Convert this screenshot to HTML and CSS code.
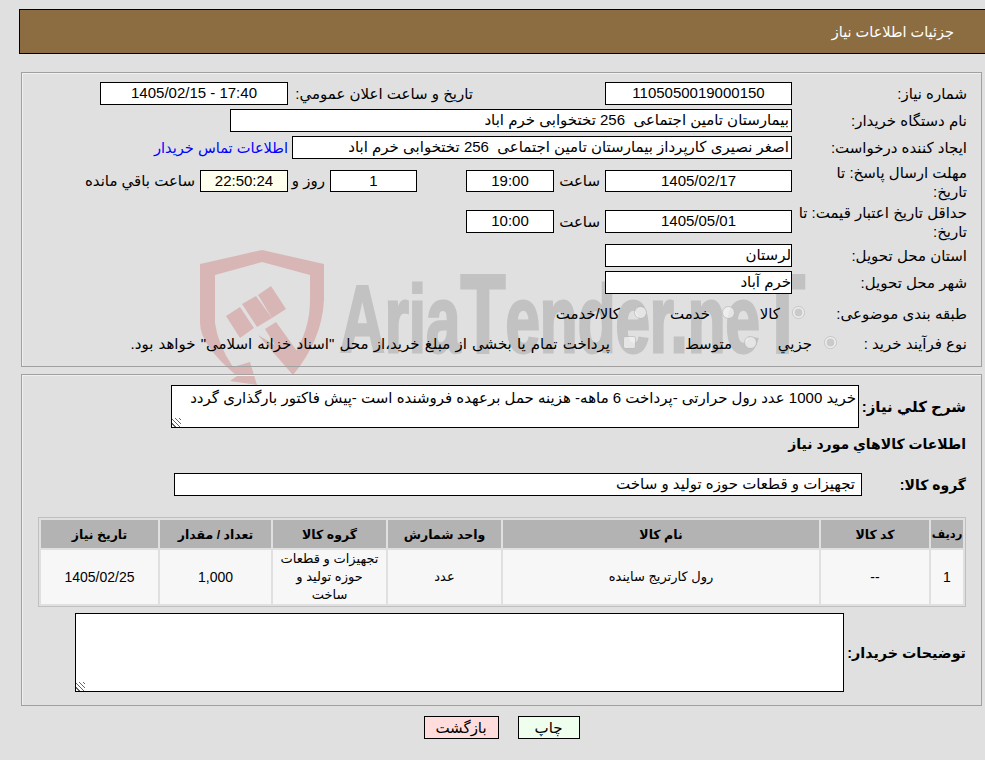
FILE: index.html
```html
<!DOCTYPE html>
<html lang="fa" dir="rtl">
<head>
<meta charset="utf-8">
<title>جزئیات اطلاعات نیاز</title>
<link rel="stylesheet" href="styles.css">
</head>
<body>
<svg class="watermark" viewBox="0 0 640 150" width="640" height="150" aria-hidden="true">
  <g class="wm-shield" transform="translate(-190 -245)">
    <path d="M200 264 L262 250 L324 264 L324 300 Q322 340 293 375 L258 335 L293 356 Q310 330 310 300 L310 275 L262 262 L215 275 L215 323 Q218 345 233 367 L250 362 L257 385 L230 381 L237 376 Q200 345 200 323 Z"/>
    <path d="M226 316 L240 307 L254 328 L240 338 Z"/>
    <path d="M242 304 L256 296 L272 318 L257 327 Z"/>
    <path d="M258 295 L271 286 L286 309 L272 318 Z"/>
    <path d="M265 329 L276 322 L302 358 L293 375 Z"/>
  </g>
  <text class="wm-text" x="150" y="107" textLength="465" lengthAdjust="spacingAndGlyphs">Aria<tspan class="wm-big">T</tspan>ender.ne<tspan class="wm-big">T</tspan></text>
</svg>

<header class="title-bar"><h1 class="title">جزئیات اطلاعات نیاز</h1></header>

<section class="panel panel-top">
  <div class="row row-first">
    <label class="lbl">شماره نیاز:</label>
    <div class="field w187 center">1105050019000150</div>
    <label class="lbl lbl-notice">تاریخ و ساعت اعلان عمومي:</label>
    <div class="field w188 center">17:40 - 1405/02/15</div>
  </div>
  <div class="row">
    <label class="lbl">نام دستگاه خریدار:</label>
    <div class="field w562">بیمارستان تامین اجتماعی&nbsp; 256 تختخوابی خرم اباد</div>
  </div>
  <div class="row">
    <label class="lbl">ایجاد کننده درخواست:</label>
    <div class="field w500">اصغر نصیری کارپرداز بیمارستان تامین اجتماعی&nbsp; 256 تختخوابی خرم اباد</div>
    <a class="contact" href="#">اطلاعات تماس خریدار</a>
  </div>
  <div class="row row-deadline">
    <label class="lbl lbl-wrap">مهلت ارسال پاسخ: تا تاریخ:</label>
    <div class="field w187 center">1405/02/17</div>
    <span class="txt w46">ساعت</span>
    <div class="field w88 center">19:00</div>
    <div class="field w87 center day">1</div>
    <span class="txt w37">روز و</span>
    <div class="field w88 center clock">22:50:24</div>
    <span class="txt">ساعت باقي مانده</span>
  </div>
  <div class="row row-valid">
    <label class="lbl">حداقل تاریخ اعتبار قیمت: تا تاریخ:</label>
    <div class="field w187 center">1405/05/01</div>
    <span class="txt w46">ساعت</span>
    <div class="field w88 center">10:00</div>
  </div>
  <div class="row row-province">
    <label class="lbl">استان محل تحویل:</label>
    <div class="field w187 tight">لرستان</div>
  </div>
  <div class="row">
    <label class="lbl">شهر محل تحویل:</label>
    <div class="field w187 tight">خرم آباد</div>
  </div>
  <div class="row row-cat">
    <label class="lbl lbl-cat">طبقه بندی موضوعی:</label>
    <div class="opt w70"><input type="radio" name="cat" disabled checked><span>کالا</span></div>
    <div class="opt w88"><input type="radio" name="cat" disabled><span>خدمت</span></div>
    <div class="opt opt-wide"><input type="radio" name="cat" disabled><span>کالا/خدمت</span></div>
  </div>
  <div class="row row-type">
    <label class="lbl lbl-type">نوع فرآیند خرید :</label>
    <div class="opt w80"><input type="radio" name="kind" disabled checked><span>جزیي</span></div>
    <div class="opt w121"><input type="radio" name="kind" disabled><span>متوسط</span></div>
    <div class="opt opt-long"><input type="checkbox" disabled><span>پرداخت تمام یا بخشی از مبلغ خرید،از محل "اسناد خزانه اسلامی" خواهد بود.</span></div>
  </div>
</section>

<section class="panel panel-bottom">
  <div class="row row-desc">
    <label class="lbl-b w107">شرح کلي نیاز:</label>
    <textarea class="area area-desc" readonly>خرید 1000 عدد رول حرارتی -پرداخت 6 ماهه- هزینه حمل برعهده فروشنده است -پیش فاکتور بارگذاری گردد</textarea>
  </div>
  <h2 class="heading">اطلاعات کالاهاي مورد نياز</h2>
  <div class="row row-group">
    <label class="lbl-b lbl-group w104">گروه کالا:</label>
    <div class="field w688 pad6">تجهیزات و قطعات حوزه تولید و ساخت</div>
  </div>
  <table class="items">
    <colgroup>
      <col class="c1"><col class="c2"><col class="c3"><col class="c4"><col class="c5"><col class="c6"><col class="c7">
    </colgroup>
    <thead>
      <tr><th class="th-narrow">ردیف</th><th>کد کالا</th><th>نام کالا</th><th>واحد شمارش</th><th>گروه کالا</th><th>تعداد / مقدار</th><th>تاریخ نیاز</th></tr>
    </thead>
    <tbody>
      <tr><td class="num">1</td><td class="num">--</td><td>رول کارتریج ساینده</td><td>عدد</td><td>تجهیزات و قطعات حوزه تولید و ساخت</td><td class="num">1,000</td><td class="num">1405/02/25</td></tr>
    </tbody>
  </table>
  <div class="row row-notes">
    <label class="lbl-b lbl-notes w122">توضیحات خریدار:</label>
    <textarea class="area area-notes" readonly></textarea>
  </div>
</section>

<div class="actions">
  <button class="btn btn-print" type="button">چاپ</button>
  <button class="btn btn-back" type="button">بازگشت</button>
</div>
</body>
</html>
```
FILE: styles.css
```css
html, body { margin: 0; padding: 0; }
body {
  background: #e0e0e0;
  color: #000;
  font-family: "Liberation Sans", "DejaVu Sans", sans-serif;
  font-size: 15px;
  height: 760px;
  overflow: hidden;
  position: relative;
}
.watermark { position: absolute; left: 190px; top: 245px; z-index: 0; direction: ltr; }
.wm-shield path { fill: #d9b6b6; }
.wm-text {
  fill: #c2c2c2;
  stroke: #c2c2c2;
  stroke-width: 3px;
  font-family: "Liberation Sans", sans-serif;
  font-weight: 700;
  font-size: 94px;
  direction: ltr;
  unicode-bidi: embed;
}
.wm-big { font-size: 112px; }

.title-bar {
  position: relative;
  box-sizing: border-box;
  height: 45px;
  margin: 9px 0 0 19px;
  padding-right: 31px;
  display: flex;
  align-items: center;
  background: #8c6d42;
  border: 1px solid #000;
  border-right-width: 0;
}
.title { margin: 0; color: #fff; font-size: 14.5px; font-weight: 400; }

.panel {
  position: relative;
  box-sizing: border-box;
  margin: 0 3px 0 21px;
  padding-right: 14px;
  border: 1px solid #a0a0a0;
  box-shadow: inset 1px 1px 0 #f0f0f0;
}
.panel-top { height: 295px; margin-top: 18px; padding-top: 9px; }
.panel-bottom { height: 332px; margin-top: 7px; padding-top: 10px; padding-right: 15px; }

.row { display: flex; align-items: center; height: 23px; margin-top: 4px; }
.row-first { margin-top: 0; }
.row-deadline { margin-top: 11px; height: 22px; }
.row-valid { margin-top: 18px; }
.row-province { margin-top: 11px; }
.row-cat { margin-top: 8px; }
.row-type { margin-top: 7px; }

.lbl { box-sizing: border-box; width: 175px; flex: none; line-height: 19px; }
.lbl-wrap { padding-left: 30px; margin-top: 1px; }
.lbl-notice { width: 185px; margin-right: 132px; }
.lbl-cat { width: 162px; }
.lbl-type { width: 130px; }
.lbl-b { flex: none; font-weight: 700; font-size: 15px; white-space: nowrap; }
.lbl-group { font-size: 14px; }
.lbl-notes { font-size: 14.3px; }

.field {
  box-sizing: border-box;
  flex: none;
  height: 100%;
  padding: 0 2px;
  line-height: 20px;
  background: #fff;
  border: 1px solid #000;
  white-space: nowrap;
  overflow: hidden;
}
.center { text-align: center; }
.tight { padding-right: 0; }
.pad6 { padding-right: 6px; }
.clock { background: #ffffee; }
.day { margin-right: 49px; }
.w187 { width: 187px; }
.w188 { width: 188px; }
.w562 { width: 562px; }
.w500 { width: 500px; }
.w88 { width: 88px; }
.w87 { width: 87px; }
.w688 { width: 688px; }

.txt { flex: none; margin-right: 5px; white-space: nowrap; }
.w46 { width: 46px; }
.w37 { width: 37px; }
.contact { margin-right: 4px; color: #0000ff; font-size: 14.6px; text-decoration: none; white-space: nowrap; }

.opt { display: flex; align-items: center; flex: none; }
.opt input { width: 13px; height: 13px; margin: 0 0 2px 12px; flex: none; }
.opt-wide input { margin-left: 14px; }
.opt-long input { margin-left: 13px; }
.opt-long span { word-spacing: 1px; }
.w70 { width: 70px; }
.w88.opt { width: 88px; }
.w80 { width: 80px; }
.w121 { width: 121px; }

.w107 { width: 107px; }
.w104 { width: 104px; }
.w122 { width: 122px; }

.area {
  box-sizing: border-box;
  display: block;
  flex: none;
  margin: 0;
  padding: 3px 2px 2px;
  background: #fff;
  border: 1px solid #000;
  border-radius: 0;
  outline: none;
  font: inherit;
  color: #000;
}
.area::-webkit-resizer {
  background: repeating-linear-gradient(45deg, transparent 0 2px, #666 2px 3px) left bottom / 9px 9px no-repeat;
}
.row-desc { height: 43px; margin-top: 0; }
.area-desc { width: 688px; height: 43px; }
.heading { margin: 6px 0 0; height: 20px; line-height: 20px; font-size: 14px; font-weight: 700; }
.row-group { margin-top: 19px; }

.items {
  table-layout: fixed;
  width: 928px;
  margin: 21px 0 0 0;
  border: 1px solid #c0c0c0;
  border-spacing: 2px;
  border-collapse: separate;
  font-size: 13px;
  text-align: center;
}
.c1 { width: 32px; }
.c2 { width: 108px; }
.c3 { width: 316px; }
.c4 { width: 113px; }
.c5 { width: 113px; }
.c6 { width: 111px; }
.c7 { width: 117px; }
.items th { height: 28px; padding: 0; background: #b3b3b3; font-size: 12.5px; font-weight: 700; }
.items th.th-narrow { font-size: 11.5px; }
.items td { height: 54px; padding: 0 4px; background: #f7f7f7; line-height: 18px; }
.items td.num { font-size: 14px; }

.row-notes { height: 79px; margin-top: 6px; }
.area-notes { width: 769px; height: 79px; }

.actions {
  position: relative;
  display: flex;
  justify-content: center;
  gap: 19px;
  margin-top: 10px;
  padding-left: 18px;
}
.btn {
  box-sizing: border-box;
  height: 23px;
  padding: 0;
  border: 1px solid #000;
  border-radius: 0;
  font: inherit;
  color: #000;
}
.btn-print { width: 62px; background: #eeffee; }
.btn-back { width: 75px; background: #ffdddd; }
```
